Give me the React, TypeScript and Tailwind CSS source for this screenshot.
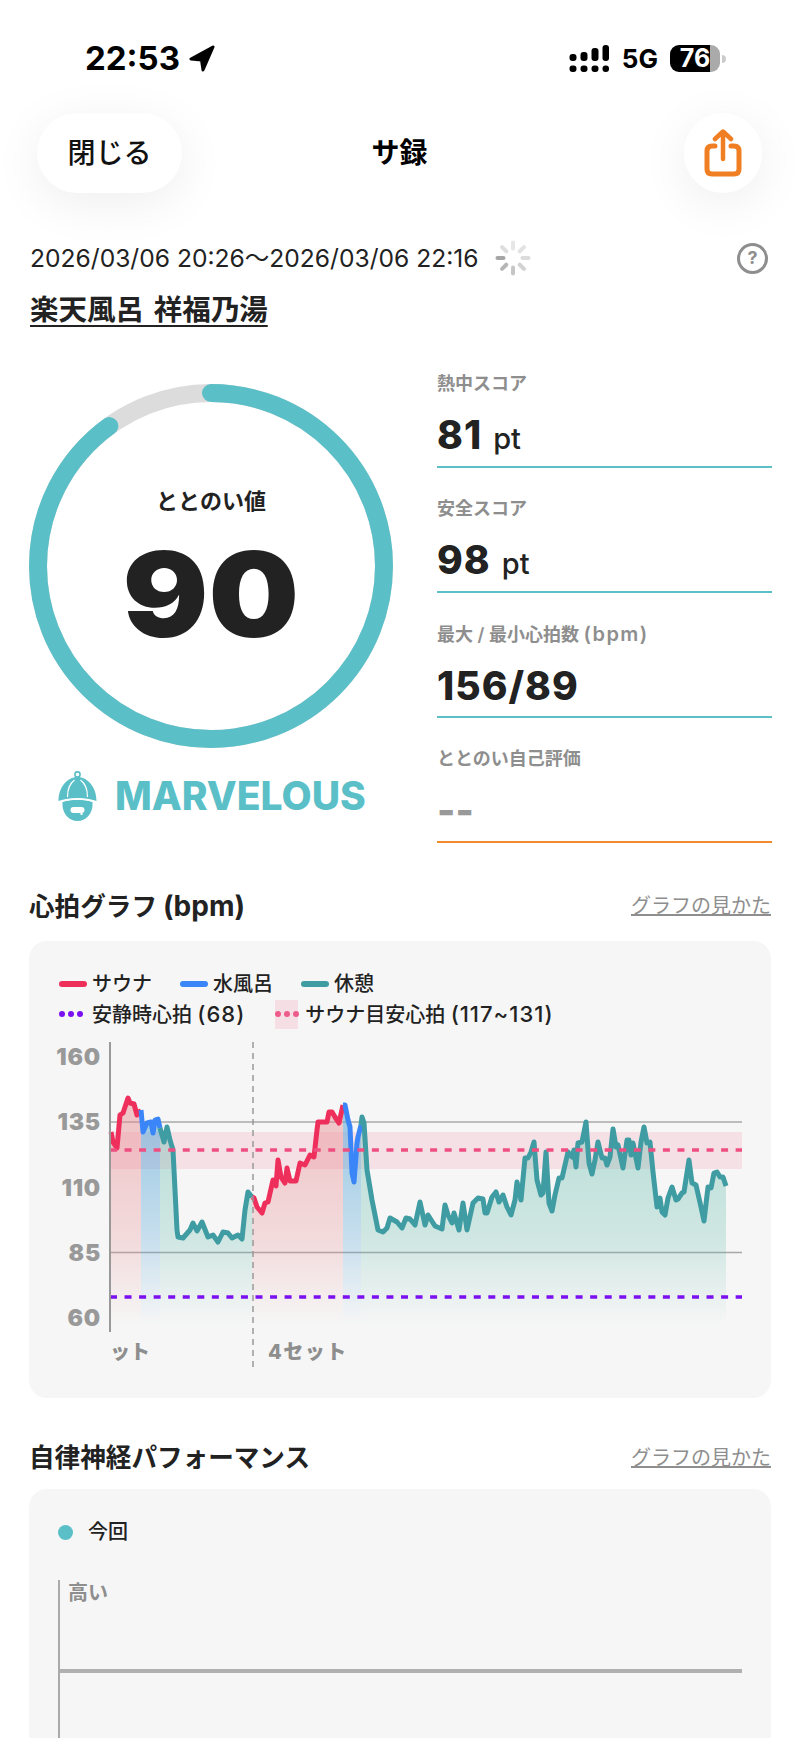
import type { ReactNode } from "react";

type Pt = [number, number];

// chart coordinates are page pixels, the svg viewBox starts at (29,1040)
const sauna1: Pt[] = [[111,1132],[113,1142],[117,1148],[120,1115],[123,1113],[128,1098],[130,1103],[134,1104],[137,1115],[141,1110]];
const cold1: Pt[] = [[141,1110],[143,1132],[147,1123],[151,1122],[153,1133],[155,1120],[158,1119],[160,1128]];
const rest1: Pt[] = [[160,1128],[164,1142],[167,1127],[170,1140],[173,1150],[177,1230],[178,1237],[183,1238],[190,1230],[193,1223],[197,1231],[202,1222],[208,1237],[213,1235],[218,1242],[223,1232],[228,1233],[232,1238],[238,1235],[242,1239],[245,1210],[248,1192],[252,1197]];
const sauna2: Pt[] = [[252,1197],[254,1198],[257,1207],[262,1213],[265,1203],[268,1202],[273,1180],[276,1186],[278,1160],[281,1177],[285,1183],[287,1168],[290,1181],[296,1181],[300,1163],[305,1165],[310,1155],[314,1157],[317,1130],[318,1122],[327,1122],[329,1112],[332,1112],[335,1117],[339,1123],[343,1105]];
const cold2: Pt[] = [[343,1105],[345,1105],[348,1120],[350,1127],[352,1173],[354,1182],[357,1143],[358,1137],[361,1125]];
const rest2: Pt[] = [[361,1125],[362,1117],[364,1123],[367,1170],[372,1200],[378,1230],[383,1232],[387,1228],[390,1218],[397,1222],[402,1228],[406,1218],[410,1219],[415,1225],[420,1202],[425,1225],[428,1215],[435,1226],[442,1229],[445,1205],[448,1215],[452,1223],[454,1213],[459,1230],[463,1203],[467,1230],[473,1203],[478,1198],[483,1199],[485,1213],[487,1213],[492,1197],[496,1192],[499,1202],[503,1195],[507,1207],[511,1215],[515,1200],[517,1182],[521,1200],[525,1158],[528,1158],[531,1152],[534,1142],[537,1180],[541,1195],[543,1193],[546,1152],[549,1203],[552,1211],[555,1195],[559,1178],[562,1178],[568,1152],[572,1157],[574,1150],[576,1167],[578,1143],[582,1142],[586,1122],[589,1163],[592,1174],[595,1160],[598,1142],[602,1158],[605,1158],[607,1165],[610,1157],[613,1129],[616,1147],[618,1145],[623,1168],[627,1140],[629,1140],[631,1155],[633,1143],[638,1168],[641,1142],[644,1127],[647,1143],[650,1142],[653,1172],[657,1207],[660,1198],[662,1212],[665,1215],[668,1198],[672,1187],[676,1200],[678,1199],[682,1193],[684,1192],[689,1160],[692,1183],[696,1185],[701,1207],[704,1221],[708,1187],[711,1188],[714,1173],[717,1172],[720,1177],[723,1177],[726,1186]];

const segments = [
  { pts: sauna1, stroke: "#ee2f5c", fill: "url(#fillRed)" },
  { pts: cold1, stroke: "#3a86f8", fill: "url(#fillBlue)" },
  { pts: rest1, stroke: "#3f9ca2", fill: "url(#fillTeal)" },
  { pts: sauna2, stroke: "#ee2f5c", fill: "url(#fillRed)" },
  { pts: cold2, stroke: "#3a86f8", fill: "url(#fillBlue)" },
  { pts: rest2, stroke: "#3f9ca2", fill: "url(#fillTeal)" },
];

const toLine = (pts: Pt[]) => pts.map((p) => p.join(",")).join(" ");
const toArea = (pts: Pt[]) =>
  `${toLine(pts)} ${pts[pts.length - 1][0]},1325 ${pts[0][0]},1325`;

const yLabels: [string, number][] = [["160", 1057], ["135", 1122], ["110", 1188], ["85", 1253], ["60", 1318]];

const scores: { label: ReactNode; value: string; unit?: string }[] = [
  { label: "熱中スコア", value: "81", unit: "pt" },
  { label: "安全スコア", value: "98", unit: "pt" },
  {
    label: (
      <>
        最大 / 最小心拍数 <span className="text-[20px] tracking-[1.5px]">(bpm)</span>
      </>
    ),
    value: "156/89",
  },
];

function StatusBar() {
  return (
    <div className="mt-[45px] flex h-[27px] items-center justify-between pl-[85px] pr-[74px]">
      <div className="flex items-center gap-[9px]">
        <span className="text-[33px] font-bold leading-none text-black">22:53</span>
        <svg width="26" height="27" viewBox="0 0 26 27">
          <path d="M24 2 L2 14 L12.5 15 L14 25 Z" fill="#000" stroke="#000" strokeWidth="3" strokeLinejoin="round" />
        </svg>
      </div>
      <div className="flex items-center">
        <svg width="40" height="27" viewBox="0 0 40 27" fill="#000">
          <rect x="0.5" y="9" width="7" height="7" rx="3" />
          <rect x="11.5" y="7" width="7" height="9" rx="3" />
          <rect x="22.5" y="3" width="7" height="13" rx="3" />
          <rect x="33.5" y="0" width="6.5" height="16" rx="3" />
          <rect x="0.5" y="20.5" width="7" height="6.5" rx="3" />
          <rect x="11.5" y="20.5" width="7" height="6.5" rx="3" />
          <rect x="22.5" y="20.5" width="7" height="6.5" rx="3" />
          <rect x="33.5" y="20.5" width="6.5" height="6.5" rx="3" />
        </svg>
        <span className="ml-[13px] text-[26px] font-bold leading-none text-black">5G</span>
        <div className="ml-[12px] flex h-[27px] w-[50px] items-center justify-center rounded-[9px] bg-[linear-gradient(90deg,#000_80%,#aaa_80%)] text-[25px] font-bold leading-none text-white">
          76
        </div>
        <div className="ml-[2px] h-[8px] w-[4px] rounded-r-full bg-[#ccc]" />
      </div>
    </div>
  );
}

function Header() {
  return (
    <div className="mt-[41px] grid h-[80px] grid-cols-[1fr_auto_1fr] items-center pl-[37px] pr-[38px]">
      <button className="flex h-[80px] w-[145px] items-center justify-center rounded-[40px] bg-white text-[28px] font-medium text-[#111] shadow-[0_10px_50px_rgba(0,0,0,0.07)]">
        閉じる
      </button>
      <div className="text-[28px] font-bold text-black">サ録</div>
      <div className="flex justify-end">
        <button className="flex h-[80px] w-[78px] items-center justify-center rounded-full bg-white shadow-[0_10px_50px_rgba(0,0,0,0.07)]">
          <svg width="38" height="48" viewBox="0 0 38 48" fill="none" stroke="#f07f24" strokeWidth="5" strokeLinecap="round" strokeLinejoin="round">
            <path d="M19 30 V3 M11 10 L19 2.5 L27 10" strokeWidth="4.5" />
            <path d="M11 17 H8 Q3 17 3 22 V40 Q3 45 8 45 H30 Q35 45 35 40 V22 Q35 17 30 17 H27" />
          </svg>
        </button>
      </div>
    </div>
  );
}

function Spinner() {
  const shades = ["#a6a6a6", "#dedede", "#e6e6e6", "#e2e2e2", "#dcdcdc", "#d2d2d2", "#c6c6c6", "#b6b6b6"];
  return (
    <svg width="36" height="36" viewBox="-18 -18 36 36" className="ml-[16px]">
      {shades.map((c, i) => (
        <rect key={i} x="-17.5" y="-2" width="10" height="4" rx="2" fill={c} transform={`rotate(${i * 45})`} />
      ))}
    </svg>
  );
}

function Ring() {
  return (
    <div className="relative flex h-[364px] w-[364px] flex-col items-center text-[#222]">
      <svg width="364" height="364" viewBox="0 0 364 364" className="absolute inset-0">
        <circle cx="182" cy="182" r="173" fill="none" stroke="#dcdcdc" strokeWidth="18" />
        <circle
          cx="182"
          cy="182"
          r="173"
          fill="none"
          stroke="#5bbfc8"
          strokeWidth="18"
          strokeLinecap="round"
          pathLength={100}
          strokeDasharray="90 100"
          transform="rotate(-90 182 182)"
        />
      </svg>
      <div className="relative mt-[101px] text-[22px] font-bold leading-[32px]">ととのい値</div>
      <div className="relative mt-[17px] scale-x-[1.08] text-[118px] font-black leading-[120px]">90</div>
    </div>
  );
}

function Rating() {
  return (
    <div className="mt-[22px] flex items-center pl-[26px]">
      <svg width="45" height="51" viewBox="0 0 44 51">
        <circle cx="22" cy="4.5" r="2.6" fill="none" stroke="#5bbfc8" strokeWidth="1.6" />
        <path d="M3 31 C3 17 12 7 22 7 C32 7 41 17 41 31 C30 27 14 27 3 31 Z" fill="#5bbfc8" />
        <path d="M12 27 C12 19 15 13 19 10 M32 27 C32 19 29 13 25 10" fill="none" stroke="#fff" strokeWidth="1.2" />
        <path d="M7 32 C16 29 28 29 37 32 C38 44 30 51 22 51 C14 51 6 44 7 32 Z" fill="#5bbfc8" />
        <path d="M0 33 C14 28 30 28 44 33" fill="none" stroke="#fff" strokeWidth="1.3" />
        <rect x="15" y="37" width="14" height="6" rx="3" fill="#fff" />
        <rect x="25" y="41" width="2" height="4" fill="#fff" />
      </svg>
      <span className="ml-[15px] text-[39px] font-extrabold leading-none text-[#5bbfc8]">MARVELOUS</span>
    </div>
  );
}

function ScoreItem({ label, line, children }: { label: ReactNode; line: string; children: ReactNode }) {
  return (
    <div className={`h-[125px] border-b-2 pt-[28px] ${line}`}>
      <div className="text-[18px] font-semibold leading-[26px] text-[#8e8e8e]">{label}</div>
      <div className="mt-[14px] flex h-[48px] items-baseline text-[#222]">{children}</div>
    </div>
  );
}

function SectionTitle({ children }: { children: ReactNode }) {
  return (
    <div className="flex h-[32px] items-center justify-between">
      <h2 className="text-[25.6px] font-bold text-[#222]">{children}</h2>
      <a className="text-[20px] text-[#8e8e8e] underline">グラフの見かた</a>
    </div>
  );
}

function Swatch({ color }: { color: string }) {
  return <span className={`mr-[5px] h-[6px] w-[28px] rounded-full ${color}`} />;
}

function Dots({ color }: { color: string }) {
  return (
    <span className="flex gap-[3px]">
      <span className={`h-[6px] w-[6px] rounded-full ${color}`} />
      <span className={`h-[6px] w-[6px] rounded-full ${color}`} />
      <span className={`h-[6px] w-[6px] rounded-full ${color}`} />
    </span>
  );
}

function HeartChart() {
  return (
    <svg width="742" height="340" viewBox="29 1040 742 340" className="mt-[11px] block">
      <defs>
        <linearGradient id="fillRed" gradientUnits="userSpaceOnUse" x1="0" y1="1110" x2="0" y2="1325">
          <stop offset="0" stopColor="#e8868c" stopOpacity="0.45" />
          <stop offset="0.6" stopColor="#e8868c" stopOpacity="0.25" />
          <stop offset="1" stopColor="#e8868c" stopOpacity="0" />
        </linearGradient>
        <linearGradient id="fillBlue" gradientUnits="userSpaceOnUse" x1="0" y1="1110" x2="0" y2="1325">
          <stop offset="0" stopColor="#5aa8d8" stopOpacity="0.6" />
          <stop offset="0.6" stopColor="#5aa8d8" stopOpacity="0.3" />
          <stop offset="1" stopColor="#5aa8d8" stopOpacity="0" />
        </linearGradient>
        <linearGradient id="fillTeal" gradientUnits="userSpaceOnUse" x1="0" y1="1110" x2="0" y2="1325">
          <stop offset="0" stopColor="#5cb8a8" stopOpacity="0.4" />
          <stop offset="0.6" stopColor="#5cb8a8" stopOpacity="0.25" />
          <stop offset="1" stopColor="#5cb8a8" stopOpacity="0" />
        </linearGradient>
      </defs>

      {yLabels.map(([t, y]) => (
        <text key={t} x="101" y={y + 8} textAnchor="end" fontSize="23" fontWeight="900" letterSpacing="0.8" fill="#999">
          {t}
        </text>
      ))}

      <rect x="110" y="1132" width="632" height="37" fill="#ee4f78" fillOpacity="0.13" />
      <line x1="110" x2="742" y1="1122" y2="1122" stroke="#a8a8a8" strokeWidth="1.5" />
      <line x1="110" x2="742" y1="1252.5" y2="1252.5" stroke="#a8a8a8" strokeWidth="1.5" />

      {segments.map((s, i) => (
        <polygon key={i} points={toArea(s.pts)} fill={s.fill} />
      ))}
      {segments.map((s, i) => (
        <polyline key={i} points={toLine(s.pts)} fill="none" stroke={s.stroke} strokeWidth="5" strokeLinejoin="round" />
      ))}

      <line x1="110" x2="742" y1="1150" y2="1150" stroke="#ee4f80" strokeWidth="3.5" strokeDasharray="7 7.55" />
      <line x1="110" x2="742" y1="1297" y2="1297" stroke="#7a10f0" strokeWidth="3.5" strokeDasharray="7 7.55" />
      <line x1="253" x2="253" y1="1042" y2="1370" stroke="#999" strokeWidth="1.5" strokeDasharray="6 5" />
      <line x1="110" x2="110" y1="1042" y2="1332" stroke="#999" strokeWidth="2" />

      <text x="110" y="1359" fontSize="20" fontWeight="800" fill="#8e8e8e">ット</text>
      <text x="268" y="1359" fontSize="20" fontWeight="800" fill="#8e8e8e" letterSpacing="1.5">4セット</text>
    </svg>
  );
}

export default function App() {
  return (
    <div className="h-[1738px] w-[800px] overflow-hidden bg-white [font-family:Inter,'Noto_Sans_CJK_JP',sans-serif]">
      <div className="-mt-px pt-px">
        <StatusBar />
        <Header />
      </div>

      <div className="mt-[47px] flex h-[36px] items-center pl-[30px] pr-[32px]">
        <span className="text-[24.6px] font-normal text-[#222]">2026/03/06 20:26～2026/03/06 22:16</span>
        <Spinner />
        <div className="ml-auto flex h-[31px] w-[31px] items-center justify-center rounded-full border-[3px] border-[#8e8e8e] text-[18px] font-bold leading-none text-[#8e8e8e]">
          ?
        </div>
      </div>

      <div className="mt-[17px] pl-[30px]">
        <span className="text-[28.5px] font-bold leading-[34px] text-[#222] underline underline-offset-[5px] [word-spacing:3px]">楽天風呂 祥福乃湯</span>
      </div>

      <div className="mt-[16px] grid grid-cols-[408px_335px] pl-[29px]">
        <div className="pt-[41px]">
          <Ring />
          <Rating />
        </div>
        <div>
          {scores.map((s) => (
            <ScoreItem key={s.value} label={s.label} line="border-[#5bbfc8]">
              <span className="text-[39px] font-extrabold leading-[48px] tracking-[1px]">{s.value}</span>
              {s.unit && <span className="ml-[11px] text-[29px] font-medium">{s.unit}</span>}
            </ScoreItem>
          ))}
          <ScoreItem label="ととのい自己評価" line="border-[#f28a2e]">
            <span className="text-[39px] font-extrabold leading-[48px] text-[#999]">--</span>
          </ScoreItem>
        </div>
      </div>

      <div className="mx-[29px] mt-[47px]">
        <SectionTitle>
          心拍グラフ <span className="text-[28px]">(bpm)</span>
        </SectionTitle>
        <div className="mt-[19px] h-[457px] rounded-[18px] bg-[#f6f6f6] pt-[28px]">
          <div className="flex h-[30px] items-center pl-[30px] text-[20px] font-medium text-[#222]">
            <Swatch color="bg-[#ee2f5c]" />
            <span>サウナ</span>
            <span className="ml-[28px]" />
            <Swatch color="bg-[#3a86f8]" />
            <span>水風呂</span>
            <span className="ml-[28px]" />
            <Swatch color="bg-[#3f9ca2]" />
            <span>休憩</span>
          </div>
          <div className="flex h-[30px] items-center pl-[30px] text-[20px] font-medium text-[#222]">
            <Dots color="bg-[#7a10f0]" />
            <span className="ml-[9px]">
              安静時心拍 <span className="text-[22px] tracking-[1px]">(68)</span>
            </span>
            <span className="ml-[30px] flex h-[29px] w-[23px] items-center justify-center bg-[#f5dfe5]">
              <Dots color="bg-[#ee5c8c]" />
            </span>
            <span className="ml-[7px]">
              サウナ目安心拍 <span className="text-[22px] tracking-[1px]">(117~131)</span>
            </span>
          </div>
          <HeartChart />
        </div>
      </div>

      <div className="mx-[29px] mt-[44px]">
        <SectionTitle>自律神経パフォーマンス</SectionTitle>
        <div className="mt-[15px] h-[400px] rounded-[18px] bg-[#f6f6f6] pl-[29px] pt-[31px]">
          <div className="flex h-[24px] items-center">
            <span className="h-[15px] w-[15px] rounded-full bg-[#5bbfc8]" />
            <span className="ml-[15px] text-[20px] font-medium text-[#222]">今回</span>
          </div>
          <div className="mt-[36px] h-[200px] w-[684px] border-l-2 border-[#aaa]">
            <div className="pl-[8px] pt-[1px] text-[20px] font-bold leading-[24px] text-[#8e8e8e]">高い</div>
            <div className="mt-[64px] h-[4px] bg-[#b0b0b0]" />
          </div>
        </div>
      </div>
    </div>
  );
}
